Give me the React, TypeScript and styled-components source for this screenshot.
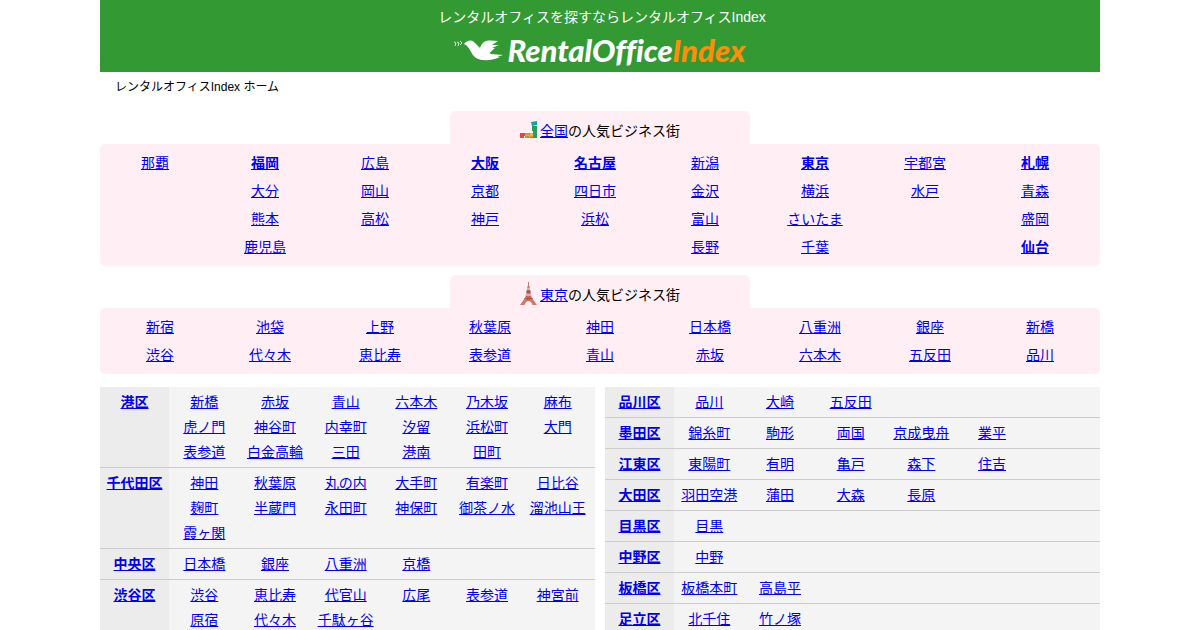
import React from "react";
import styled, { createGlobalStyle } from "styled-components";

const GlobalStyle = createGlobalStyle`
  * { box-sizing: border-box; }
  body {
    margin: 0;
    background: #fff;
    color: #000;
    font-family: "Liberation Sans", "Noto Sans CJK JP", sans-serif;
    font-size: 14px;
    font-weight: 400;
  }
  ul, p, h1, h2, h3 { margin: 0; padding: 0; }
  ul { list-style: none; }
`;

const Page = styled.div`
  max-width: 1000px;
  margin: 0 auto;
`;

const Header = styled.header`
  display: flex;
  flex-direction: column;
  align-items: center;
  height: 72px;
  padding-top: 5px;
  background: #339933;
  color: #fff;
`;

const Tagline = styled.h1`
  padding-left: 4px;
  font-size: 14px;
  font-weight: 400;
  line-height: 24px;
`;

const Logo = styled.a`
  display: flex;
  align-items: center;
  height: 42px;
  color: #fff;
  font-family: Lato, "Liberation Sans", sans-serif;
  font-size: 31px;
  font-weight: 900;
  font-style: italic;
  font-variant-ligatures: none;
  line-height: 42px;
  text-decoration: none;
`;

const LogoAccent = styled.span`
  color: #ff8c0a;
`;

const Breadcrumb = styled.nav`
  padding: 5px 15px 14px;
  font-size: 12px;
  line-height: 20px;
`;

const Region = styled.section`
  margin-bottom: 9px;
`;

const Tab = styled.h2`
  display: flex;
  align-items: center;
  justify-content: center;
  width: 300px;
  height: 33px;
  margin: 0 auto;
  padding-top: 4px;
  border-radius: 5px 5px 0 0;
  background: #ffeff4;
  font-size: 14px;
  font-weight: 400;
`;

const Panel = styled.div<{ $left: number; $right: number }>`
  display: grid;
  grid-template-columns: repeat(9, 1fr);
  padding: 5px ${(p) => p.$right}px 5px ${(p) => p.$left}px;
  border-radius: 5px;
  background: #ffeff4;
  line-height: 28px;
  text-align: center;
`;

const TextLink = styled.a<{ $strong?: boolean }>`
  color: #0000ee;
  font-weight: ${(p) => (p.$strong ? 700 : 400)};
  white-space: nowrap;
`;

const Wards = styled.div`
  display: grid;
  grid-template-columns: 1fr 1fr;
  align-items: start;
  gap: 10px;
  padding-top: 4px;
`;

const WardRow = styled.section`
  display: grid;
  grid-template-columns: 69px 1fr;
  border-bottom: 1px solid #cccccc;
  background: #f4f4f4;
  line-height: 25px;
  text-align: center;
`;

const WardName = styled.h3`
  padding: 3px 0 2px;
  background: #ececec;
  font-size: 14px;
`;

const Towns = styled.ul`
  display: grid;
  grid-template-columns: repeat(6, 1fr);
  padding: 3px 2px 2px 0;
`;

function JapanIcon() {
  return (
    <svg width="20" height="20" viewBox="0 0 20 20" aria-hidden="true">
      <path d="M11 2 17 1V5L12 6Z" fill="#14a3a0" />
      <path d="M12 6H17V18H13V11H12Z" fill="#2a9d5b" />
      <path d="M9.500 13H13V17H9.500Z" fill="#e8bd22" />
      <path d="M5 13H10V15.500H5Z" fill="#ee8838" />
      <path d="M5 15.500H9.500V18H5Z" fill="#8cab3b" />
      <path d="M0 13H5V16H4V18H0Z" fill="#e6453c" />
      <path d="M9.500 16.500H13V18H9.500Z" fill="#d86a34" />
    </svg>
  );
}

function TowerIcon() {
  return (
    <svg width="20" height="24" viewBox="0 0 20 24" aria-hidden="true">
      <path d="M8.500 0V5" stroke="#b78078" strokeWidth="1" />
      <path d="M7.500 4H9.500L10.500 11 12 16 17 23H12.500Q11 19 8.500 19 6 19 4.500 23H0L5 16 6.500 11Z" fill="#d0776b" />
      <path d="M6.500 8.500H10.500V11H6.500Z" fill="#8f625f" />
      <path d="M7 7H10M6 13H11" stroke="#f4ded6" strokeWidth="1" />
      <path d="M4.500 16.500H12.500" stroke="#a15550" strokeWidth="1" />
      <path d="M7 18 10.500 14M10 18 6.500 14" stroke="#b65248" strokeWidth="1" />
    </svg>
  );
}

function BirdIcon() {
  return (
    <svg width="53" height="28" viewBox="0 0 53 28" aria-hidden="true">
      <path
        d="M10 8C13 4 18 3 21 7L26 12C29 4 33 4 44 5L38 9H45L38 12H41C37 16 34 17 37 18L49 19 43 21H46C40 24 29 26 22 22 16 18 17 11 10 8Z"
        fill="#fff"
      />
      <path d="M0 6 2 7 1 10M3 6 5 7 4 10M6 5 8 7 6 9" fill="none" stroke="#d9f0d9" strokeWidth="1" />
    </svg>
  );
}

type City = { name: string; strong?: boolean };
const city = (name: string): City => ({ name });
const major = (name: string): City => ({ name, strong: true });

const nationwide: City[][] = [
  [city("那覇")],
  [major("福岡"), city("大分"), city("熊本"), city("鹿児島")],
  [city("広島"), city("岡山"), city("高松")],
  [major("大阪"), city("京都"), city("神戸")],
  [major("名古屋"), city("四日市"), city("浜松")],
  [city("新潟"), city("金沢"), city("富山"), city("長野")],
  [major("東京"), city("横浜"), city("さいたま"), city("千葉")],
  [city("宇都宮"), city("水戸")],
  [major("札幌"), city("青森"), city("盛岡"), major("仙台")],
];

const tokyo: City[][] = [
  [city("新宿"), city("渋谷")],
  [city("池袋"), city("代々木")],
  [city("上野"), city("恵比寿")],
  [city("秋葉原"), city("表参道")],
  [city("神田"), city("青山")],
  [city("日本橋"), city("赤坂")],
  [city("八重洲"), city("六本木")],
  [city("銀座"), city("五反田")],
  [city("新橋"), city("品川")],
];

type Ward = { name: string; towns: string[] };

const westWards: Ward[] = [
  {
    name: "港区",
    towns: [
      "新橋", "赤坂", "青山", "六本木", "乃木坂", "麻布",
      "虎ノ門", "神谷町", "内幸町", "汐留", "浜松町", "大門",
      "表参道", "白金高輪", "三田", "港南", "田町",
    ],
  },
  {
    name: "千代田区",
    towns: [
      "神田", "秋葉原", "丸の内", "大手町", "有楽町", "日比谷",
      "麹町", "半蔵門", "永田町", "神保町", "御茶ノ水", "溜池山王",
      "霞ヶ関",
    ],
  },
  { name: "中央区", towns: ["日本橋", "銀座", "八重洲", "京橋"] },
  {
    name: "渋谷区",
    towns: ["渋谷", "恵比寿", "代官山", "広尾", "表参道", "神宮前", "原宿", "代々木", "千駄ヶ谷"],
  },
];

const eastWards: Ward[] = [
  { name: "品川区", towns: ["品川", "大崎", "五反田"] },
  { name: "墨田区", towns: ["錦糸町", "駒形", "両国", "京成曳舟", "業平"] },
  { name: "江東区", towns: ["東陽町", "有明", "亀戸", "森下", "住吉"] },
  { name: "大田区", towns: ["羽田空港", "蒲田", "大森", "長原"] },
  { name: "目黒区", towns: ["目黒"] },
  { name: "中野区", towns: ["中野"] },
  { name: "板橋区", towns: ["板橋本町", "高島平"] },
  { name: "足立区", towns: ["北千住", "竹ノ塚"] },
];

type RegionProps = {
  icon: React.ReactNode;
  area: string;
  columns: City[][];
  left: number;
  right: number;
};

function RegionBlock({ icon, area, columns, left, right }: RegionProps) {
  return (
    <Region>
      <Tab>
        {icon}
        <TextLink href="#">{area}</TextLink>の人気ビジネス街
      </Tab>
      <Panel $left={left} $right={right}>
        {columns.map((column) => (
          <ul key={column[0].name}>
            {column.map((c) => (
              <li key={c.name}>
                <TextLink href="#" $strong={c.strong}>{c.name}</TextLink>
              </li>
            ))}
          </ul>
        ))}
      </Panel>
    </Region>
  );
}

function WardList({ wards }: { wards: Ward[] }) {
  return (
    <div>
      {wards.map((ward) => (
        <WardRow key={ward.name}>
          <WardName>
            <TextLink href="#" $strong>{ward.name}</TextLink>
          </WardName>
          <Towns>
            {ward.towns.map((town) => (
              <li key={town}>
                <TextLink href="#">{town}</TextLink>
              </li>
            ))}
          </Towns>
        </WardRow>
      ))}
    </div>
  );
}

export default function App() {
  return (
    <>
      <GlobalStyle />
      <Page>
        <Header>
          <Tagline>レンタルオフィスを探すならレンタルオフィスIndex</Tagline>
          <Logo href="#">
            <BirdIcon />
            <span>RentalOffice<LogoAccent>Index</LogoAccent></span>
          </Logo>
        </Header>
        <Breadcrumb>レンタルオフィスIndex ホーム</Breadcrumb>
        <main>
          <RegionBlock icon={<JapanIcon />} area="全国" columns={nationwide} left={0} right={10} />
          <RegionBlock icon={<TowerIcon />} area="東京" columns={tokyo} left={5} right={5} />
          <Wards>
            <WardList wards={westWards} />
            <WardList wards={eastWards} />
          </Wards>
        </main>
      </Page>
    </>
  );
}
